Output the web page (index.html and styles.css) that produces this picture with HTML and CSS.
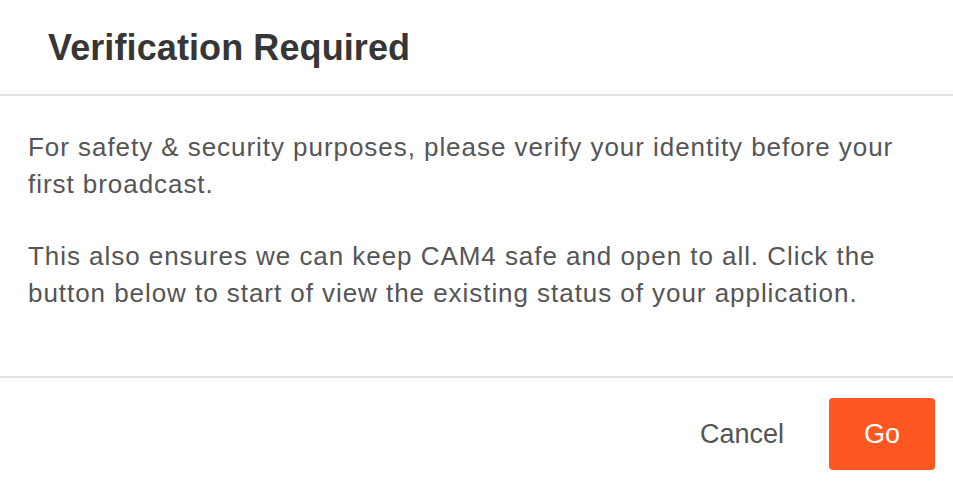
FILE: index.html
```html
<!DOCTYPE html>
<html lang="en">
<head>
<meta charset="utf-8">
<title>Verification Required</title>
<link rel="stylesheet" href="styles.css">
</head>
<body>
<div class="modal">
  <div class="modal-header">
    <h1 class="modal-title">Verification Required</h1>
  </div>
  <div class="modal-body">
    <p class="modal-text">For safety &amp; security purposes, please verify your identity before your first broadcast.</p>
    <p class="modal-text">This also ensures we can keep CAM4 safe and open to all. Click the button below to start of view the existing status of your application.</p>
  </div>
  <div class="modal-footer">
    <button class="btn btn-cancel" type="button">Cancel</button>
    <button class="btn btn-go" type="button">Go</button>
  </div>
</div>
</body>
</html>
```
FILE: styles.css
```css
html, body {
  margin: 0;
  padding: 0;
  background: #ffffff;
}
body {
  font-family: "Liberation Sans", Arial, Helvetica, sans-serif;
  color: #555555;
}
.modal {
  width: 953px;
  background: #ffffff;
}
.modal-header {
  height: 94px;
  display: flex;
  align-items: center;
  padding-left: 48px;
  border-bottom: 2px solid #e5e5e5;
  box-sizing: content-box;
}
.modal-title {
  margin: 0;
  font-size: 36px;
  font-weight: 700;
  color: #363636;
  line-height: 1;
  padding-top: 2px;
  letter-spacing: 0.1px;
}
.modal-body {
  padding: 33px 30px 64px 28px;
}
.modal-text {
  margin: 0;
  font-size: 26px;
  line-height: 37px;
  letter-spacing: 0.95px;
  color: #555555;
}
.modal-text + .modal-text {
  margin-top: 35px;
}
.modal-footer {
  border-top: 2px solid #e5e5e5;
  display: flex;
  justify-content: flex-end;
  align-items: center;
  gap: 45px;
  padding: 20px 18px 20px 0;
}
.btn {
  font-family: "Liberation Sans", Arial, Helvetica, sans-serif;
  font-size: 27px;
  border: none;
  cursor: pointer;
  line-height: 1;
}
.btn-cancel {
  background: transparent;
  color: #555555;
  padding: 0;
}
.btn-go {
  background: #ff5722;
  color: #ffffff;
  width: 106px;
  height: 72px;
  border-radius: 4px;
  padding: 0;
}
```
